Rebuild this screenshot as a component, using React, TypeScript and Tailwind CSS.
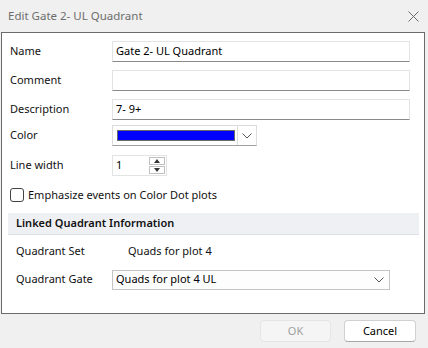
import React from "react";

const font = "font-['Segoe_UI','Noto_Sans',sans-serif]";

function Row({ label, children }: { label: string; children?: React.ReactNode }) {
  return (
    <div className="flex items-center">
      <span className="w-[102px] text-[11px] text-[#111]">{label}</span>
      {children}
    </div>
  );
}

function TextBox({ value }: { value?: string }) {
  return (
    <div className="flex h-[21px] w-[298px] items-center border border-[#e3e3e3] border-b-[#8a8a8a] bg-white px-[3px] text-[11px] text-black">
      {value}
    </div>
  );
}

function Chevron() {
  return (
    <svg width="10" height="6" viewBox="0 0 10 6" fill="none" stroke="#555" strokeWidth="1">
      <path d="M0.5 0.5 L5 5 L9.5 0.5" />
    </svg>
  );
}

export default function App() {
  return (
    <div className={`${font} flex h-[348px] w-[428px] flex-col bg-[#f0f0f0]`}>
      {/* Title bar */}
      <div className="flex h-[32px] items-center justify-between pl-[8px] pr-[9px]">
        <span className="text-[11.5px] text-[#6d6d6d]">Edit Gate 2- UL Quadrant</span>
        <svg width="11" height="11" viewBox="0 0 11 11" stroke="#6b6b6b" strokeWidth="1">
          <path d="M0.5 0.5 L10.5 10.5 M10.5 0.5 L0.5 10.5" />
        </svg>
      </div>

      {/* Content */}
      <div className="ml-[1px] mr-[3px] flex h-[282px] flex-col border border-[#6b6b6b] bg-white pl-[6px] pr-[5px]">
        <div className="flex flex-col gap-[8px] pt-[8px] pl-[2px]">
          <Row label="Name">
            <TextBox value="Gate 2- UL Quadrant" />
          </Row>
          <Row label="Comment">
            <TextBox />
          </Row>
          <Row label="Description">
            <TextBox value="7- 9+" />
          </Row>
        </div>
        <div className="mt-[5px] pl-[2px]">
          <Row label="Color">
            <div className="flex h-[21px] w-[145px] border border-[#dcdcdc] border-b-[#a0a0a0] bg-white">
              <div className="m-[4px] mr-[2px] flex-1 border border-[#6b6b6b] bg-[#0000ff]" />
              <div className="flex w-[19px] items-center justify-center border-l border-[#dcdcdc]">
                <Chevron />
              </div>
            </div>
          </Row>
        </div>
        <div className="mt-[9px] pl-[2px]">
          <Row label="Line width">
            <div className="flex h-[21px] w-[55px] items-center border border-[#e3e3e3] bg-white">
              <span className="flex-1 pl-[3px] text-[11px] text-black">1</span>
              <div className="flex h-full w-[17px] flex-col justify-center gap-[1px] pr-[1px]">
                <div className="flex h-[8px] items-center justify-center border border-[#c0c0c0]">
                  <svg width="6" height="4" viewBox="0 0 6 4"><path d="M0 4 L3 0 L6 4 Z" fill="#333" /></svg>
                </div>
                <div className="flex h-[8px] items-center justify-center border border-[#c0c0c0]">
                  <svg width="6" height="4" viewBox="0 0 6 4"><path d="M0 0 L3 4 L6 0 Z" fill="#333" /></svg>
                </div>
              </div>
            </div>
          </Row>
        </div>
        <div className="mt-[11px] flex items-center gap-[4px] pl-[2px]">
          <div className="h-[14px] w-[14px] rounded-[3px] border border-[#444] bg-white" />
          <span className="text-[11px] text-[#111]">Emphasize events on Color Dot plots</span>
        </div>
        <div className="mt-[9px] flex h-[22px] items-center border-b border-[#dde0e6] bg-[#eff0f4] pl-[8px]">
          <span className="text-[11px] font-semibold text-[#111]">Linked Quadrant Information</span>
        </div>
        <div className="mt-[9px] flex flex-col gap-[10px] pl-[8px]">
          <div className="flex h-[16px] items-center">
            <span className="w-[112px] text-[11px] text-[#111]">Quadrant Set</span>
            <span className="text-[11px] text-[#111]">Quads for plot 4</span>
          </div>
          <div className="flex items-center">
            <span className="w-[96px] text-[11px] text-[#111]">Quadrant Gate</span>
            <div className="flex h-[20px] w-[278px] items-center justify-between border border-[#c4c4c4] bg-[#fdfdfd] pl-[3px] pr-[5px]">
              <span className="text-[11px] text-black">Quads for plot 4 UL</span>
              <Chevron />
            </div>
          </div>
        </div>
      </div>

      {/* Footer */}
      <div className="flex flex-1 items-center justify-end gap-[13px] pr-[12px]">
        <button className="h-[22px] w-[71px] rounded-[4px] border border-[#e5e5e5] bg-[#f5f5f5] text-[11px] text-[#a0a0a0]">
          OK
        </button>
        <button className="h-[22px] w-[72px] rounded-[4px] border border-[#d0d0d0] border-b-[#a8a8a8] bg-white text-[11px] text-black">
          Cancel
        </button>
      </div>
    </div>
  );
}
